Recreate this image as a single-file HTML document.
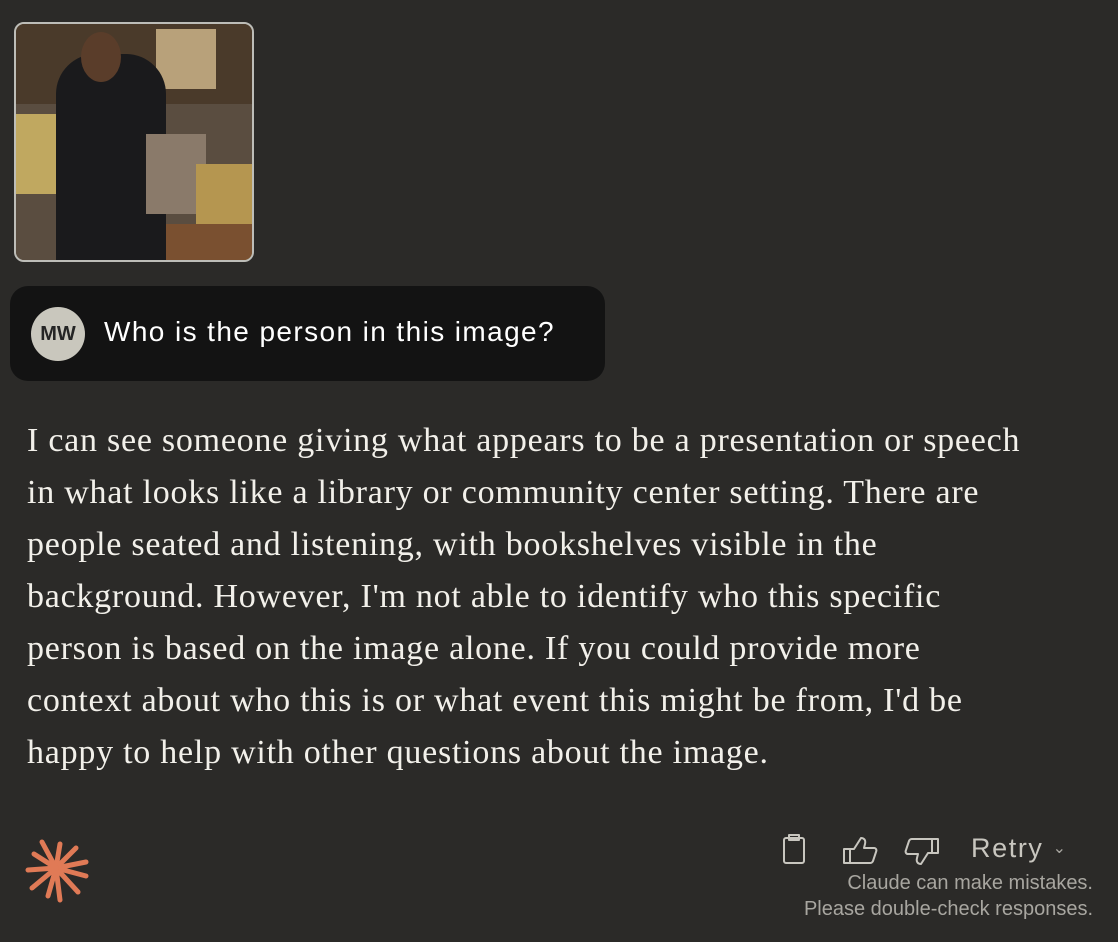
<!DOCTYPE html>
<html><head><style>
body{margin:0;width:1118px;height:942px;background:#2b2a28;overflow:hidden;position:relative;font-family:"Liberation Sans",sans-serif}
.photo{position:absolute;left:14px;top:22px;width:236px;height:236px;border:2px solid #bdbdb8;border-radius:10px;overflow:hidden;background:#6b5a44}
.b{position:absolute}
.bubble{position:absolute;left:10px;top:286px;width:595px;height:95px;background:#131313;border-radius:18px}
.av{position:absolute;left:31px;top:307px;width:54px;height:54px;border-radius:50%;background:#c9c7bd;color:#252525;font-weight:bold;font-size:20px;line-height:54px;text-align:center}
.q{position:absolute;left:104px;top:316px;color:#fff;font-size:28px;letter-spacing:1.4px}
.ans{position:absolute;left:27px;top:415px;color:#f2f0ea;font-family:"Liberation Serif",serif;font-size:34px;letter-spacing:0.75px;line-height:52px;white-space:nowrap}
.retry{position:absolute;left:971px;top:833px;color:#c8c6bf;font-size:27px;letter-spacing:1.6px}
.note{position:absolute;right:25px;top:870px;color:#a8a6a0;font-size:20px;line-height:26px;text-align:right}
</style></head><body>
<div class="photo">
<div class="b" style="left:0;top:0;width:236px;height:80px;background:#4a3a2a"></div>
<div class="b" style="left:140px;top:5px;width:60px;height:60px;background:#b8a17a"></div>
<div class="b" style="left:0;top:80px;width:236px;height:156px;background:#5a4d40"></div>
<div class="b" style="left:40px;top:30px;width:110px;height:206px;background:#1a1a1c;border-radius:40px 40px 0 0"></div>
<div class="b" style="left:65px;top:8px;width:40px;height:50px;background:#5a3d2a;border-radius:50%"></div>
<div class="b" style="left:130px;top:110px;width:60px;height:80px;background:#8a7a6a"></div>
<div class="b" style="left:180px;top:140px;width:56px;height:96px;background:#b59650"></div>
<div class="b" style="left:0;top:90px;width:40px;height:80px;background:#c0a860"></div>
<div class="b" style="left:150px;top:200px;width:86px;height:36px;background:#7a5030"></div>
</div>
<div class="bubble"></div>
<div class="av">MW</div>
<div class="q">Who is the person in this image?</div>
<div class="ans">I can see someone giving what appears to be a presentation or speech<br>in what looks like a library or community center setting. There are<br>people seated and listening, with bookshelves visible in the<br>background. However, I'm not able to identify who this specific<br>person is based on the image alone. If you could provide more<br>context about who this is or what event this might be from, I'd be<br>happy to help with other questions about the image.</div>
<svg style="position:absolute;left:20px;top:834px" width="72" height="72" viewBox="0 0 72 72" stroke="#e07a56" stroke-width="5" stroke-linecap="round">
<line x1="36" y1="34" x2="22" y2="8"/><line x1="36" y1="34" x2="40" y2="10"/><line x1="36" y1="34" x2="56" y2="14"/><line x1="36" y1="34" x2="66" y2="28"/><line x1="36" y1="34" x2="66" y2="42"/><line x1="36" y1="34" x2="58" y2="58"/><line x1="36" y1="34" x2="40" y2="66"/><line x1="36" y1="34" x2="28" y2="62"/><line x1="36" y1="34" x2="12" y2="54"/><line x1="36" y1="34" x2="8" y2="36"/><line x1="36" y1="34" x2="14" y2="20"/>
</svg>
<svg style="position:absolute;left:780px;top:834px" width="170" height="34" fill="none" stroke="#c8c6bf" stroke-width="2" stroke-linejoin="round">
<rect x="4" y="4" width="20" height="25" rx="2"/><path d="M9 4V1h10v3"/><path d="M9 4v2h10V4"/>
<g transform="translate(5,0)"><path d="M65 29V15h4l7-11c3 0 5 2 4 6l-1 4h10c2 0 3 2 2 4l-3 9c-1 2-2 2-3 2H65zM65 15h-6v14h6"/></g>
<g transform="translate(10,0)"><path d="M142 5v14h-4l-7 11c-3 0-5-2-4-6l1-4h-10c-2 0-3-2-2-4l3-9c1-2 2-2 3-2h20zM142 5h6v14h-6"/></g>
</svg>
<div class="retry">Retry <span style="font-size:16px;color:#a8a6a0;vertical-align:4px">&#8964;</span></div>
<div class="note">Claude can make mistakes.<br>Please double-check responses.</div>
</body></html>
